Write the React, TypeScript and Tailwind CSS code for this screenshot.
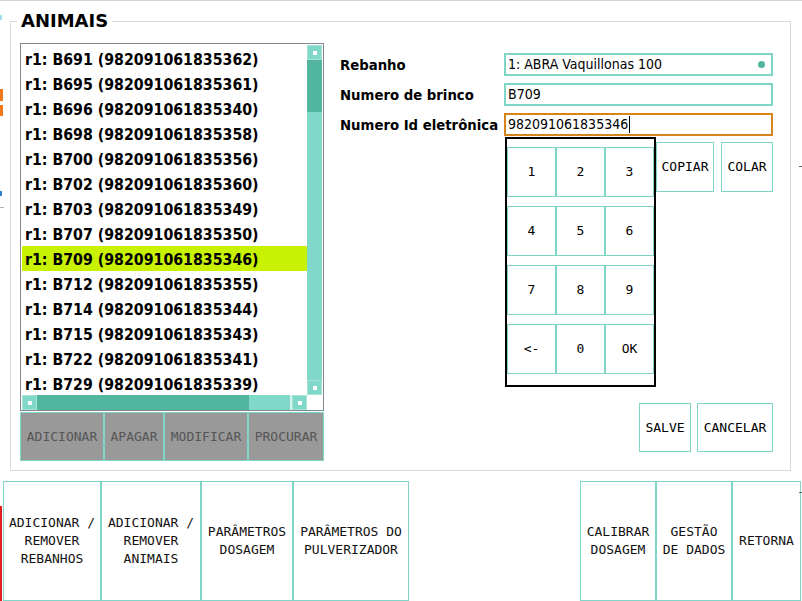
import React from "react";

const items = [
  "r1: B691 (982091061835362)",
  "r1: B695 (982091061835361)",
  "r1: B696 (982091061835340)",
  "r1: B698 (982091061835358)",
  "r1: B700 (982091061835356)",
  "r1: B702 (982091061835360)",
  "r1: B703 (982091061835349)",
  "r1: B707 (982091061835350)",
  "r1: B709 (982091061835346)",
  "r1: B712 (982091061835355)",
  "r1: B714 (982091061835344)",
  "r1: B715 (982091061835343)",
  "r1: B722 (982091061835341)",
  "r1: B729 (982091061835339)",
];

function ScrollBtn() {
  return (
    <div className="w-[15px] h-[15px] bg-[#80d8c8] border border-[#a6e4d8] flex items-center justify-center">
      <div className="w-[4px] h-[4px] bg-white" />
    </div>
  );
}

export default function App() {
  const keys = ["1", "2", "3", "4", "5", "6", "7", "8", "9", "<-", "0", "OK"];
  const rows = [0, 1, 2, 3];
  return (
    <div className="relative w-[802px] h-[601px] overflow-hidden bg-white border-t border-[#d4d4d4]">
      {/* background artifacts on edges */}
      <div className="absolute left-0 top-[14px] w-[2px] h-[5px] bg-[#9fdcf0]" />
      <div className="absolute left-0 top-[88px] w-[3px] h-[12px] bg-[#f07818]" />
      <div className="absolute left-0 top-[104px] w-[3px] h-[11px] bg-[#f07818]" />
      <div className="absolute left-0 top-[190px] w-[2px] h-[5px] bg-[#3080d0]" />
      <div className="absolute left-0 top-[206px] w-[4px] h-[1px] bg-[#b0b0b0]" />
      <div className="absolute left-0 top-[505px] w-[2px] h-[96px] bg-[#e02020]" />
      <div className="absolute left-[799px] top-[165px] w-[3px] h-[1px] bg-[#606060]" />
      <div className="absolute left-[799px] top-[491px] w-[3px] h-[1px] bg-[#606060]" />

      {/* group box */}
      <div className="relative mt-[20px] ml-[10px] w-[781px] h-[450px] border border-[#d9d9d9]">
        <div className="absolute left-[6px] top-[-12px] px-[4px] bg-white font-['DejaVu_Sans',sans-serif] font-bold text-[18px] leading-[22px] text-black">
          ANIMAIS
        </div>
        <div className="flex pt-[21px] pl-[9px]">
          {/* left column */}
          <div className="w-[304px] flex flex-col">
            <div className="w-[304px] h-[368px] border border-[#828790] pt-[1px] px-[1px] grid grid-cols-[285px_15px] grid-rows-[350px_15px]">
              <div className="overflow-hidden pt-[1px]">
                {items.map((t, i) => (
                  <div
                    key={t}
                    className={`h-[25px] flex items-center pl-[3px] pt-[2px] whitespace-nowrap font-['DejaVu_Sans_Condensed','DejaVu_Sans',sans-serif] font-bold text-[15.75px] text-black ${
                      i === 8 ? "bg-[#c8f202]" : ""
                    }`}
                  >
                    {t}
                  </div>
                ))}
              </div>
              <div className="flex flex-col">
                <ScrollBtn />
                <div className="h-[52px] bg-[#52b59e]" />
                <div className="flex-1 bg-[#80d8c8]" />
                <ScrollBtn />
              </div>
              <div className="flex">
                <ScrollBtn />
                <div className="w-[212px] bg-[#52b59e]" />
                <div className="w-[41px] bg-[#80d8c8]" />
                <div className="w-[2px] bg-[#d8f2ec]" />
                <ScrollBtn />
              </div>
              <div className="bg-white" />
            </div>
            <div className="mt-[1px] flex h-[49px] font-['DejaVu_Sans_Mono',monospace] text-[13px] text-[#555555]">
              {[
                ["ADICIONAR", "w-[84px]"],
                ["APAGAR", "w-[60px]"],
                ["MODIFICAR", "w-[84px]"],
                ["PROCURAR", "w-[76px]"],
              ].map(([t, w]) => (
                <div
                  key={t}
                  className={`${w} h-full bg-[#999999] border border-[#7fd6c6] flex items-center justify-center`}
                >
                  {t}
                </div>
              ))}
            </div>
          </div>

          {/* right column */}
          <div className="ml-[16px] pt-[10px] w-[433px] flex flex-col">
            {[
              ["Rebanho", "1: ABRA Vaquillonas 100", "teal", true],
              ["Numero de brinco", "B709", "teal", false],
              ["Numero Id eletrônica", "982091061835346", "orange", false],
            ].map(([label, value, kind, dot], i) => (
              <div key={label as string} className={`flex items-center h-[23px] ${i < 2 ? "mb-[7px]" : ""}`}>
                <div className="w-[164px] pt-[2px] font-['DejaVu_Sans_Condensed','DejaVu_Sans',sans-serif] font-bold text-[14.75px] text-black whitespace-nowrap">
                  {label as string}
                </div>
                <div
                  className={`w-[269px] h-[23px] border-2 ${
                    kind === "orange" ? "border-[#d8841c]" : "border-[#7fd6c6]"
                  } flex items-center pl-[2px] pr-[6px] font-['DejaVu_Sans_Condensed','DejaVu_Sans',sans-serif] text-[14px] text-black`}
                >
                  <span className="whitespace-nowrap">{value as string}</span>
                  {kind === "orange" && <span className="w-[1px] h-[17px] bg-black ml-[1px]" />}
                  {dot && <span className="ml-auto w-[7px] h-[7px] rounded-full bg-[#52b59e]" />}
                </div>
              </div>
            ))}

            <div className="flex mt-[1px] pl-[165px]">
              <div className="w-[151px] h-[250px] border-2 border-black pt-[8px] flex flex-col gap-[9px]">
                {rows.map((r) => (
                  <div key={r} className="grid grid-cols-3 h-[50px]">
                    {keys.slice(r * 3, r * 3 + 3).map((k) => (
                      <div
                        key={k}
                        className="border border-[#7fd6c6] flex items-center justify-center font-['DejaVu_Sans_Mono',monospace] text-[13px] text-black"
                      >
                        {k}
                      </div>
                    ))}
                  </div>
                ))}
              </div>
              <div className="mt-[5px] w-[58px] h-[50px] border border-[#7fd6c6] flex items-center justify-center font-['DejaVu_Sans_Mono',monospace] text-[13px] text-black">
                COPIAR
              </div>
              <div className="mt-[5px] ml-[7px] w-[52px] h-[50px] border border-[#7fd6c6] flex items-center justify-center font-['DejaVu_Sans_Mono',monospace] text-[13px] text-black">
                COLAR
              </div>
            </div>

            <div className="flex justify-end mt-[16px] gap-[6px] font-['DejaVu_Sans_Mono',monospace] text-[13px] text-black">
              <div className="w-[52px] h-[49px] border border-[#7fd6c6] flex items-center justify-center">SALVE</div>
              <div className="w-[76px] h-[49px] border border-[#7fd6c6] flex items-center justify-center">CANCELAR</div>
            </div>
          </div>
        </div>
      </div>

      {/* bottom bar */}
      <div className="mt-[10px] flex justify-between pl-[3px] pr-[1px] font-['DejaVu_Sans_Mono',monospace] text-[13px] leading-[18px] text-[#111111]">
        <div className="flex">
          <div className="w-[98px] h-[120px] border border-[#7fd6c6] flex items-center justify-center text-center">
            ADICIONAR /<br />REMOVER<br />REBANHOS
          </div>
          <div className="w-[100px] h-[120px] border border-[#7fd6c6] flex items-center justify-center text-center">
            ADICIONAR /<br />REMOVER<br />ANIMAIS
          </div>
          <div className="w-[92px] h-[120px] border border-[#7fd6c6] flex items-center justify-center text-center">
            PARÂMETROS<br />DOSAGEM
          </div>
          <div className="w-[116px] h-[120px] border border-[#7fd6c6] flex items-center justify-center text-center">
            PARÂMETROS DO<br />PULVERIZADOR
          </div>
        </div>
        <div className="flex">
          <div className="w-[76px] h-[120px] border border-[#7fd6c6] flex items-center justify-center text-center">
            CALIBRAR<br />DOSAGEM
          </div>
          <div className="w-[76px] h-[120px] border border-[#7fd6c6] flex items-center justify-center text-center">
            GESTÃO<br />DE DADOS
          </div>
          <div className="w-[69px] h-[120px] border border-[#7fd6c6] flex items-center justify-center text-center">
            RETORNA
          </div>
        </div>
      </div>
    </div>
  );
}
